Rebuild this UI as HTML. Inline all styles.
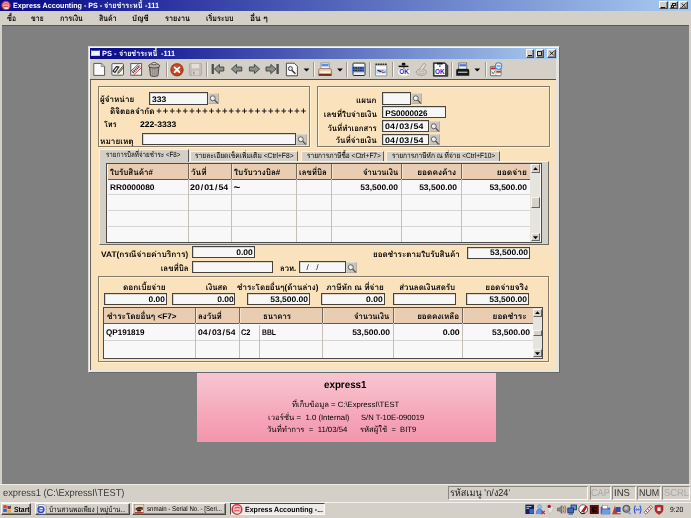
<!DOCTYPE html>
<html lang="th">
<head>
<meta charset="utf-8">
<title>Express Accounting - PS</title>
<style>
html,body{margin:0;padding:0;}
body{width:691px;height:518px;position:relative;overflow:hidden;background:#808080;
 font-family:"Liberation Sans","Loma","Noto Sans Thai Looped","Noto Sans Thai UI","Noto Sans Thai",sans-serif;font-size:7.5px;color:#000;}
div,span{box-sizing:border-box;}
.a{position:absolute;}
.t{position:absolute;white-space:nowrap;font-weight:bold;line-height:12px;height:12px;text-rendering:geometricPrecision;}
.inp{position:absolute;background:#f7f7f7;border:0.9px solid #46423c;box-shadow:inset 0.8px 0.8px 0 #d0ccc4;}
.sb{position:absolute;background:#c9c5bd;border:0.6px solid #b4b0a8;border-top-color:#dcd8d0;border-left-color:#dcd8d0;}
.grp{position:absolute;border:1px solid #857b6a;box-shadow:inset 1px 1px 0 #fff2da,1px 1px 0 #fff2da;}
.hd{position:absolute;background:#e8cdb2;}
.hv{position:absolute;width:1px;background:#74695a;box-shadow:1px 0 0 #f4e2cc;}
.vl{position:absolute;width:1px;background:#c4c0b8;}
.hl{position:absolute;height:1px;background:#d6d4d0;}
.tab{position:absolute;background:#d4d0c8;border-top:1px solid #f4f2ee;border-left:1px solid #f4f2ee;border-right:1px solid #5c5c5c;}
.tsep{position:absolute;width:1px;background:#9c9890;box-shadow:1px 0 0 #f4f2ee;}
.tb{position:absolute;background:#d4d0c8;border:1px solid #f8f8f4;border-right-color:#484848;border-bottom-color:#484848;box-shadow:inset -1px -1px 0 #8c8880;}
.sbb{position:absolute;background:#d6d2ca;border:0.8px solid #f6f4f0;border-right-color:#66645f;border-bottom-color:#66645f;}
.pn{position:absolute;border:1px solid #8c8880;border-right-color:#f8f8f4;border-bottom-color:#f8f8f4;}
</style>
</head>
<body>
<!-- ===== main title bar ===== -->
<div class="a" style="left:0;top:0;width:691px;height:11px;background:linear-gradient(90deg,#0a0a8a 0%,#101490 8%,#a8ccf0 100%);"></div>
<svg class="a" style="left:0;top:0;" width="12" height="11" viewBox="0 0 12 11"><circle cx="6" cy="5.5" r="4.1" fill="#eea0b0" stroke="#c03c40" stroke-width="1.2"/><path d="M3.8 4.6 Q6 2.8 8.4 4.4 M3.6 6.6 H8" stroke="#cc3838" stroke-width="0.8" fill="none"/><ellipse cx="6.4" cy="8.2" rx="2.2" ry="0.9" fill="#f4ecd0"/></svg>
<!-- ===== menu bar ===== -->
<div class="a" style="left:0;top:10.5px;width:691px;height:14.5px;background:#d4d0c8;"></div>
<div class="a" style="left:0;top:24.6px;width:691px;height:1.6px;background:#5a5a5a;"></div>
<div class="a" style="left:0;top:24.6px;width:1.5px;height:460px;background:#d4d0c8;"></div>
<div class="a" style="left:689px;top:24.6px;width:2px;height:460px;background:#d4d0c8;"></div>
<!-- ===== pink info box ===== -->
<div class="a" style="left:196.5px;top:366px;width:299.5px;height:75.6px;background:linear-gradient(180deg,#f8c8d3 0%,#f7bcc9 28%,#f5a4b7 70%,#f395ab 100%);"></div>
<!-- ===== status bar ===== -->
<div class="a" style="left:0;top:483.6px;width:691px;height:19px;background:#d4d0c8;border-top:1px solid #ecebe6;"></div>
<div class="pn" style="left:447.5px;top:486.3px;width:140.5px;height:14px;"></div>
<div class="pn" style="left:589.8px;top:486.3px;width:21px;height:14px;"></div>
<div class="pn" style="left:612px;top:486.3px;width:23.8px;height:14px;"></div>
<div class="pn" style="left:637px;top:486.3px;width:23.6px;height:14px;"></div>
<div class="pn" style="left:662.4px;top:486.3px;width:28px;height:14px;"></div>
<!-- ===== taskbar ===== -->
<div class="a" style="left:0;top:501.6px;width:691px;height:16.4px;background:#d4d0c8;border-top:1px solid #f4f3ef;"></div>
<div class="tb" style="left:1.3px;top:503.3px;width:29.4px;height:12px;"></div>
<div class="tb" style="left:34.5px;top:503.3px;width:95px;height:12px;"></div>
<div class="tb" style="left:132px;top:503.3px;width:94.4px;height:12px;"></div>
<div class="a" style="left:229.5px;top:503.3px;width:95.5px;height:12px;background:#ecebe8;border:1px solid #484848;border-right-color:#f8f8f4;border-bottom-color:#f8f8f4;"></div>
<!--TRAY_START-->
<svg class="a" style="left:0px;top:502px;" width="691" height="16" viewBox="0 502 691 16">
<!-- start flag -->
<path d="M3.2 505.4 Q5 504.4 6.8 505.4 V508.4 Q5 507.4 3.2 508.4 Z" fill="#e04030"/>
<path d="M7.4 505.6 Q9.2 506.6 11 505.6 V508.6 Q9.2 509.6 7.4 508.6 Z" fill="#704838"/>
<path d="M3.2 509 Q5 508 6.8 509 V512.2 Q5 511.2 3.2 512.2 Z" fill="#3060d8"/>
<path d="M7.4 509.2 Q9.2 510.2 11 509.2 V512.2 Q9.2 513.2 7.4 512.2 Z" fill="#e8a040"/>
<!-- ie doc icon -->
<path d="M38.6 504.6 H44 L46 506.6 V514 H38.6 Z" fill="#fafafa" stroke="#6c6c6c" stroke-width="0.6"/>
<circle cx="41" cy="509.6" r="2.9" fill="none" stroke="#2848d0" stroke-width="1.5"/>
<path d="M38.2 509.8 H43.6" stroke="#2848d0" stroke-width="1"/>
<path d="M37.4 511.6 Q40 506 44.6 506.4" stroke="#5c8cf0" stroke-width="0.7" fill="none"/>
<!-- snmain icon -->
<rect x="134.6" y="504.6" width="9.2" height="9.2" fill="#e8d8c0" stroke="#8c7c6c" stroke-width="0.5"/>
<path d="M135.4 508.4 Q139 505.6 143 507.6 L142.6 510 Q139 508.2 135.8 510.4 Z" fill="#5c2c1c"/>
<ellipse cx="139" cy="510.4" rx="2.2" ry="1.2" fill="#2c1c14"/>
<rect x="135" y="512" width="8.4" height="1.6" fill="#b84030"/>
<!-- express icon -->
<circle cx="237" cy="509.4" r="4.8" fill="#f4b4c0" stroke="#cc3838" stroke-width="1.5"/>
<path d="M234.6 508.4 Q237 506.4 239.8 508 M234.4 510.8 H239.2" stroke="#cc3838" stroke-width="0.9" fill="none"/>
<ellipse cx="237.4" cy="512.4" rx="2.4" ry="1" fill="#f4ecd0"/>
<!-- tray -->
<rect x="525.4" y="504.6" width="8.6" height="9.4" fill="#14205c"/>
<rect x="529.4" y="509" width="4.4" height="4.6" fill="#3c64c8"/>
<path d="M526.4 506.6 H531.4 M526.4 508.4 H529" stroke="#e8ecf8" stroke-width="0.8"/>
<circle cx="539.6" cy="506.6" r="1.9" fill="#9cc4f4" stroke="#3c74d0" stroke-width="0.5"/>
<path d="M536.2 513.6 Q536.2 509 539.6 509 Q543 509 543 513.6 Z" fill="#5c94e8" stroke="#3064c0" stroke-width="0.5"/>
<path d="M541.4 510.8 L544.8 514 M544.8 510.8 L541.4 514" stroke="#d02020" stroke-width="1.1"/>
<path d="M546.8 505.6 L554 506.4 L551.6 512.6 L549 513.4 Z" fill="#e4e2dc" stroke="#b4b0a8" stroke-width="0.5"/>
<circle cx="549.2" cy="506.4" r="1.7" fill="#a01c1c"/>
<path d="M557.4 508 H559.4 L562 505.4 V513.6 L559.4 511 H557.4 Z" fill="#8c8880" stroke="#4c4c4c" stroke-width="0.5"/>
<path d="M563.2 506.4 Q565 509.4 563.2 512.6 M564.8 505.4 Q567 509.4 564.8 513.6" stroke="#c03028" stroke-width="0.8" fill="none"/>
<rect x="571" y="505" width="5.6" height="4.8" fill="#5c8cd8" stroke="#1c2c5c" stroke-width="0.8"/>
<rect x="567.8" y="508" width="5.6" height="4.8" fill="#3c6cc0" stroke="#1c2c5c" stroke-width="0.8"/>
<path d="M568.6 514 H573" stroke="#1c2c5c" stroke-width="0.9"/>
<circle cx="583.2" cy="509.2" r="4.4" fill="#f8f8f8" stroke="#3c3c3c" stroke-width="0.8"/>
<path d="M581 511.8 L585.4 505.4 L587.4 506.6 L584 512.4 Z" fill="#b01c24"/>
<path d="M580.2 512.6 Q582 514.4 585 513" stroke="#111" stroke-width="1" fill="none"/>
<rect x="589.8" y="505" width="9" height="9" fill="#5c0c0c"/>
<path d="M592 507 H596.8 V508.6 H594 V510.6 H596.8 V512.2 H592 Z" fill="#0c0404"/>
<path d="M601 507 H604 L605 508 H609.8 V514 H601 Z" fill="#3c74d8" stroke="#1c3c8c" stroke-width="0.5"/>
<rect x="602.4" y="505.2" width="5" height="3.6" fill="#fcfcfc" stroke="#5c5c5c" stroke-width="0.4"/>
<path d="M601.4 514 L602.6 509.6 H610 L609.4 514 Z" fill="#6c9cf0"/>
<path d="M612.4 513.6 L615 505.4 L617.4 513.6 Z" fill="#c83820"/>
<rect x="616" y="507" width="4.6" height="5" fill="#2c4cc0"/>
<path d="M612.2 513.8 H620.8" stroke="#5c2c1c" stroke-width="0.8"/>
<circle cx="626.4" cy="508.8" r="3.6" fill="#8c8c8c" stroke="#3c3c3c" stroke-width="0.8"/>
<circle cx="626" cy="508.2" r="1.6" fill="#c4c4c4"/>
<path d="M627.6 512 L630.6 514" stroke="#7c9cd8" stroke-width="1.6"/>
<path d="M635.4 505.6 Q633 509.6 635.4 513.6 M639.8 505.6 Q642.2 509.6 639.8 513.6" stroke="#2c54d8" stroke-width="1.1" fill="none"/>
<path d="M635.8 509.6 H639.4 M636.8 508.4 L635.6 509.6 L636.8 510.8 M638.4 508.4 L639.6 509.6 L638.4 510.8" stroke="#2c54d8" stroke-width="0.7" fill="none"/>
<path d="M644 512.4 L650.6 505.4 L652.6 507.2 L646 514.2 Z" fill="#f4f4f4" stroke="#8c1c1c" stroke-width="0.6"/>
<path d="M645.6 510.8 L647.6 512.6 M647.4 508.8 L649.4 510.6 M649.2 506.8 L651.2 508.6" stroke="#c02020" stroke-width="1"/>
<path d="M655 505.6 Q659 504.6 663 505.6 V509.6 Q663 512.6 659 514.4 Q655 512.6 655 509.6 Z" fill="#c02828" stroke="#6c2c3c" stroke-width="0.6"/>
<path d="M657.4 507.4 H660.6 V511 H657.4 Z" fill="#f4e4e4"/>
</svg>
<!--TRAY_END-->
<!-- ===== child window ===== -->
<div class="a" style="left:88px;top:46px;width:472px;height:327.2px;background:#e6e4de;border:1px solid #dcd9d2;border-right-color:#6a6a6a;border-bottom-color:#6a6a6a;box-shadow:inset 1px 1px 0 #f6f5f1;"></div>
<div class="a" style="left:90.3px;top:58.4px;width:466.2px;height:21px;background:#d4d0c8;"></div>
<div class="a" style="left:90.3px;top:48.2px;width:466.4px;height:10.4px;background:linear-gradient(90deg,#0a0a8a 0%,#101490 8%,#a8ccf0 100%);"></div>
<!-- child title icon -->
<div class="a" style="left:91.4px;top:49.8px;width:8.2px;height:6.6px;background:#f4f4f4;border:0.6px solid #c8d0e4;border-top:1.6px solid #2c50b0;"></div>
<!-- child title buttons -->
<div class="tb" style="left:526.3px;top:49.4px;width:8.2px;height:8.2px;"></div>
<div class="tb" style="left:535.6px;top:49.4px;width:8.8px;height:8.2px;"></div>
<div class="tb" style="left:546.7px;top:49.4px;width:9px;height:8.2px;"></div>
<div class="a" style="left:528.2px;top:55.2px;width:3.4px;height:1px;background:#111;"></div>
<div class="a" style="left:537.4px;top:51.2px;width:5px;height:5px;border:0.55px solid #222;border-top-width:1.1px;"></div>
<svg class="a" style="left:548.6px;top:51.2px;" width="5.4" height="4.6" viewBox="0 0 5.4 4.6"><path d="M0.6 0.4 L4.8 4.2 M4.8 0.4 L0.6 4.2" stroke="#111" stroke-width="0.9" fill="none"/></svg>
<!-- main title buttons -->
<div class="tb" style="left:659px;top:1.4px;width:8.6px;height:8px;"></div>
<div class="tb" style="left:668.6px;top:1.4px;width:9.2px;height:8px;"></div>
<div class="tb" style="left:679.3px;top:1.4px;width:9px;height:8px;"></div>
<div class="a" style="left:661.2px;top:6.9px;width:3.6px;height:1px;background:#111;"></div>
<div class="a" style="left:671.8px;top:2.8px;width:3.8px;height:3.2px;border:0.5px solid #222;border-top-width:1px;"></div>
<div class="a" style="left:670.5px;top:4.5px;width:3.8px;height:3.4px;border:0.5px solid #222;border-top-width:1px;background:#d4d0c8;"></div>
<svg class="a" style="left:681.2px;top:3px;" width="5.4" height="4.8" viewBox="0 0 5.4 4.8"><path d="M0.6 0.4 L4.8 4.4 M4.8 0.4 L0.6 4.4" stroke="#111" stroke-width="0.9" fill="none"/></svg>
<!-- toolbar separators -->
<div class="tsep" style="left:165.6px;top:61.5px;height:15px;"></div>
<div class="tsep" style="left:205.8px;top:61.5px;height:15px;"></div>
<div class="tsep" style="left:313.4px;top:61.5px;height:15px;"></div>
<div class="tsep" style="left:346.2px;top:61.5px;height:15px;"></div>
<div class="tsep" style="left:369.4px;top:61.5px;height:15px;"></div>
<div class="tsep" style="left:392px;top:61.5px;height:15px;"></div>
<div class="tsep" style="left:451.2px;top:61.5px;height:15px;"></div>
<div class="tsep" style="left:484.6px;top:61.5px;height:15px;"></div>
<!--TOOLBAR_START-->
<svg class="a" style="left:88px;top:58px;" width="472" height="22" viewBox="88 58 472 22">
<!-- new doc -->
<path d="M93.8 63.4 H101.4 L104.6 66.4 V75.4 H93.8 Z" fill="#fbfbfb" stroke="#4c4c4c" stroke-width="0.9"/>
<path d="M101.2 63.6 V66.6 H104.4" fill="#dcdcdc" stroke="#6c6c6c" stroke-width="0.7"/>
<!-- edit doc -->
<rect x="111.9" y="63.6" width="11.6" height="11.6" rx="1" fill="#f4f4f4" stroke="#4c4c4c" stroke-width="0.9"/>
<path d="M113 71.2 L116.4 66.6 L118.8 67 L115 72.4 Z" fill="#fff" stroke="#222" stroke-width="1.1"/>
<path d="M117.6 73.4 L118.2 71.6 L122.6 66.2 L123.8 67.2 L119.4 72.6 Z" fill="#c8a040" stroke="#3c3c3c" stroke-width="0.7"/>
<!-- cancel doc -->
<rect x="130.8" y="63.6" width="10.8" height="11.6" fill="#f6f6f6" stroke="#4c4c4c" stroke-width="0.9"/>
<path d="M132.6 72.6 L139.8 65.6" stroke="#444" stroke-width="2.4" stroke-dasharray="1.2 0.7"/>
<path d="M131 71 L138.6 63.8 M133.6 75 L141.4 67.6" stroke="#d02020" stroke-width="0.9"/>
<!-- trash -->
<path d="M149.4 66.6 L150.4 75.8 Q154.2 77.4 158 75.8 L159 66.6 Z" fill="#8c8880" stroke="#3c3c3c" stroke-width="0.8"/>
<path d="M151.6 68 V75.6 M153.4 68 V76 M155.2 68 V76 M157 68 V75.6" stroke="#c4c0b8" stroke-width="0.6"/>
<ellipse cx="154.2" cy="65.8" rx="5.6" ry="2.2" fill="#b4b0a8" stroke="#3c3c3c" stroke-width="0.8"/>
<ellipse cx="154.2" cy="63.6" rx="2.4" ry="1.2" fill="#d4d0c8" stroke="#3c3c3c" stroke-width="0.7"/>
<!-- red x -->
<circle cx="177" cy="69.8" r="6.3" fill="#b8401c" stroke="#8c2c10" stroke-width="0.6"/>
<circle cx="176.6" cy="69.2" r="4.6" fill="#cc5430" opacity="0.7"/>
<path d="M174.6 67.4 L179.4 72.2 M179.4 67.4 L174.6 72.2" stroke="#fff" stroke-width="1.9" stroke-linecap="round"/>
<!-- floppy disabled -->
<rect x="189.4" y="63.4" width="12.2" height="12" rx="0.8" fill="#c2beb6" stroke="#aaa69e" stroke-width="0.8"/>
<rect x="191.6" y="63.8" width="7.6" height="4.6" fill="#e2e0da"/>
<rect x="192" y="70.6" width="7" height="4.6" fill="#d6d2ca"/>
<rect x="193" y="71.6" width="1.6" height="2.8" fill="#9c988f"/>
<!-- first -->
<rect x="211.6" y="64" width="2.3" height="10" fill="#4c504c"/>
<path d="M214.4 69 L219.4 64.4 V67 H223.8 V71 H219.4 V73.6 Z" fill="#8c908c" stroke="#3c403c" stroke-width="0.9"/>
<!-- prev -->
<path d="M231.4 69 L236.6 64.4 V67 H241.8 V71 H236.6 V73.6 Z" fill="#8c908c" stroke="#3c403c" stroke-width="0.9"/>
<!-- next -->
<path d="M259.6 69 L254.4 64.4 V67 H249.4 V71 H254.4 V73.6 Z" fill="#8c908c" stroke="#3c403c" stroke-width="0.9"/>
<!-- last -->
<path d="M276 69 L270.8 64.4 V67 H266 V71 H270.8 V73.6 Z" fill="#8c908c" stroke="#3c403c" stroke-width="0.9"/>
<rect x="276.4" y="64" width="2.4" height="10" fill="#4c504c"/>
<!-- preview doc -->
<path d="M286.4 63.2 H294.2 L297.4 66.2 V75.8 H286.4 Z" fill="#f8f8f8" stroke="#3c3c3c" stroke-width="0.9"/>
<circle cx="290.4" cy="68.6" r="2" fill="#e8ecf0" stroke="#2c2c2c" stroke-width="0.9"/>
<path d="M291.8 70.2 L295.4 73.8" stroke="#2c2c2c" stroke-width="1.3"/>
<path d="M303.6 68.4 H309.4 L306.5 71.4 Z" fill="#000"/>
<!-- printer color -->
<rect x="321" y="63" width="8.2" height="6" fill="#f4f8fc" stroke="#5c6c8c" stroke-width="0.6"/>
<rect x="321.6" y="64" width="7" height="2.4" fill="#5c8ce0"/>
<path d="M318.6 70.2 Q318.6 68.6 320.4 68.6 H329.8 Q331.6 68.6 331.6 70.2 V74 H318.6 Z" fill="#ecd0ac" stroke="#80604c" stroke-width="0.7"/>
<rect x="320.4" y="71.4" width="9.6" height="1.6" fill="#fcf4e8"/>
<rect x="318.6" y="74" width="13" height="1.9" fill="#7c2818"/>
<path d="M337.1 68.4 H342.9 L340 71.4 Z" fill="#000"/>
<!-- doc list icon -->
<rect x="353" y="63.1" width="12" height="12.4" rx="0.8" fill="#fafafa" stroke="#2c2c2c" stroke-width="1"/>
<rect x="351.9" y="66.6" width="12.6" height="5.7" fill="#4c7cd0"/>
<path d="M353 68 H363.6 M353 70.4 H363.6" stroke="#1c2430" stroke-width="1.3" stroke-dasharray="1.6 0.8"/>
<path d="M354 73.9 H364" stroke="#c8c8c8" stroke-width="0.6"/>
<!-- doc list 2 -->
<rect x="375.4" y="65" width="11.4" height="10.8" rx="0.6" fill="#ececec" stroke="#7c7c7c" stroke-width="0.8"/>
<path d="M375.4 64.2 H387" stroke="#2c2c2c" stroke-width="1.5" stroke-dasharray="1.7 0.7"/>
<rect x="376.2" y="66.6" width="9.8" height="2" fill="#fcfcfc"/>
<rect x="376.2" y="69" width="9.8" height="4.6" fill="#c8d8f4"/>
<path d="M377.6 70.4 L381.4 71.6" stroke="#14207c" stroke-width="1.3" fill="none"/>
<path d="M381.4 71.2 L383.4 70.4" stroke="#d03030" stroke-width="0.9"/>
<path d="M382 72.6 L385.6 72" stroke="#2c4cc0" stroke-width="0.9"/>
<rect x="376.2" y="73.9" width="9.8" height="1.3" fill="#fcfcfc"/>
<!-- OK stamp -->
<rect x="401.8" y="62.8" width="3.6" height="2.6" rx="1" fill="#111"/>
<rect x="398.6" y="65.6" width="9.8" height="1.5" fill="#111"/>
<ellipse cx="404" cy="72" rx="6" ry="3.8" fill="#fcfcfc"/>
<rect x="403.2" y="67.4" width="1.4" height="1.2" fill="#2030c0"/>
<text x="404" y="74.4" font-family="Liberation Sans, sans-serif" font-size="6.4" font-weight="bold" fill="#1c2cc8" text-anchor="middle">OK</text>
<!-- grey stamp -->
<ellipse cx="421.4" cy="72.2" rx="5.2" ry="3.2" fill="none" stroke="#9c9890" stroke-width="0.9"/>
<ellipse cx="421.4" cy="72.4" rx="2.8" ry="1.4" fill="none" stroke="#aaa69e" stroke-width="0.7"/>
<path d="M419.6 69 L423.4 63.8 Q425.4 63 426 64.8 L422.6 70" fill="#e0ded8" stroke="#9c9890" stroke-width="0.9"/>
<!-- OK doc -->
<path d="M433.4 62.8 H445.2 L447.8 65.6 V76.2 H433.4 Z" fill="#4c4c4c" stroke="#222" stroke-width="0.8"/>
<rect x="434.6" y="64" width="10.4" height="11" fill="#fafafa"/>
<rect x="437" y="62.8" width="5.6" height="1.7" fill="#111"/>
<rect x="439.2" y="65.4" width="1.4" height="1.4" fill="#2030c0"/>
<text x="439.9" y="74" font-family="Liberation Sans, sans-serif" font-size="6.4" font-weight="bold" fill="#1c2cc8" text-anchor="middle">OK</text>
<!-- black printer -->
<rect x="458.8" y="63" width="8" height="6.4" fill="#f0f4fc" stroke="#3c3c3c" stroke-width="0.6"/>
<rect x="459.4" y="64.2" width="6.8" height="2.2" fill="#4c74d8"/>
<path d="M456.2 70.4 Q456.2 68.8 458 68.8 H467.4 Q469.2 68.8 469.2 70.4 V75.8 H456.2 Z" fill="#141c14"/>
<rect x="458" y="71.6" width="9.4" height="1.3" fill="#b8c0b8"/>
<path d="M474.4 68.4 H480.2 L477.3 71.4 Z" fill="#000"/>
<!-- last icon -->
<rect x="490.4" y="66.4" width="10.6" height="9.4" rx="0.8" fill="#c8c8c8" stroke="#5c5c5c" stroke-width="0.8"/>
<rect x="491" y="67.6" width="4.8" height="1.6" fill="#c02020"/>
<rect x="491.2" y="70.4" width="4" height="4.4" fill="#f4f4f4"/>
<path d="M491.8 71.6 L493.2 73.8 L495 70.8" stroke="#333" stroke-width="0.7" fill="none"/>
<rect x="496.4" y="71" width="4.4" height="1.6" fill="#d03030"/>
<rect x="496.4" y="73.4" width="4.4" height="1.6" fill="#f4f4f4"/>
<circle cx="498.6" cy="66" r="3.2" fill="#e4f0fc" stroke="#4c84d4" stroke-width="1.1"/>
<rect x="496.6" y="65.4" width="4" height="1.2" fill="#4c84d4"/>
</svg>
<!--TOOLBAR_END-->
<!-- ===== form ===== -->
<div class="a" style="left:90px;top:78.9px;width:466.2px;height:290.7px;background:#fae2bd;border-top:1px solid #56524c;border-left:1px solid #66625a;"></div>
<div class="grp" style="left:97.5px;top:86.4px;width:212.4px;height:60.6px;"></div>
<div class="grp" style="left:317.4px;top:86.4px;width:233px;height:60.6px;"></div>
<div class="grp" style="left:98px;top:276.4px;width:451px;height:86px;"></div>
<!-- inputs -->
<div class="inp" style="left:148.7px;top:92.4px;width:59.5px;height:12.2px;"></div>
<div class="inp" style="left:141.8px;top:133.4px;width:154.1px;height:12.1px;"></div>
<div class="inp" style="left:382.4px;top:92.4px;width:28.5px;height:12.2px;"></div>
<div class="inp" style="left:382.4px;top:106.4px;width:63.8px;height:12.1px;"></div>
<div class="inp" style="left:382.4px;top:120.3px;width:46.4px;height:11.7px;"></div>
<div class="inp" style="left:382.4px;top:133.7px;width:46.4px;height:11.7px;"></div>
<div class="inp" style="left:192.1px;top:246.4px;width:62.7px;height:12.1px;"></div>
<div class="inp" style="left:466.5px;top:246.5px;width:63.2px;height:12.1px;"></div>
<div class="inp" style="left:192.1px;top:260.7px;width:80.7px;height:12.3px;"></div>
<div class="inp" style="left:298.9px;top:261px;width:46.7px;height:12.0px;"></div>
<div class="inp" style="left:103.7px;top:293px;width:63.0px;height:12.3px;"></div>
<div class="inp" style="left:172px;top:293px;width:63.0px;height:12.3px;"></div>
<div class="inp" style="left:246.9px;top:293px;width:63.0px;height:12.3px;"></div>
<div class="inp" style="left:321px;top:293px;width:63.5px;height:12.3px;"></div>
<div class="inp" style="left:393.1px;top:293px;width:62.8px;height:12.3px;"></div>
<div class="inp" style="left:466px;top:293px;width:62.9px;height:12.3px;"></div>
<!-- inputs group 2 -->
<!-- tabs -->
<div class="a" style="left:98.6px;top:161px;width:450.6px;height:84.2px;background:#d4d0c8;border-top:1px solid #f4f2ee;border-left:1px solid #f4f2ee;border-right:1.2px solid #6c6a66;border-bottom:1.1px solid #6c6a66;"></div>
<div class="tab" style="left:190px;top:150.6px;width:108.4px;height:10.4px;"></div>
<div class="tab" style="left:300.6px;top:150.6px;width:83.4px;height:10.4px;"></div>
<div class="tab" style="left:386px;top:150.6px;width:114px;height:10.4px;"></div>
<div class="tab" style="left:98.6px;top:149.2px;width:90px;height:12.8px;"></div>
<!-- grid 1 -->
<div class="a" style="left:106.4px;top:162.8px;width:435.2px;height:79.9px;background:#f8f8f8;border:1.4px solid #4c4a46;border-right-width:1.1px;border-bottom-width:1.1px;"></div>
<div class="hd" style="left:107.8px;top:164.2px;width:422.6px;height:15.6px;border-bottom:1.2px solid #635a4e;"></div>
<div class="hl" style="left:107.8px;top:194.4px;width:422.6px;"></div>
<div class="hl" style="left:107.8px;top:210.1px;width:422.6px;"></div>
<div class="hl" style="left:107.8px;top:225.7px;width:422.6px;"></div>
<div class="vl" style="left:187.8px;top:164.2px;height:77.4px;"></div>
<div class="vl" style="left:230.8px;top:164.2px;height:77.4px;"></div>
<div class="vl" style="left:295.6px;top:164.2px;height:77.4px;"></div>
<div class="vl" style="left:331.4px;top:164.2px;height:77.4px;"></div>
<div class="vl" style="left:400.8px;top:164.2px;height:77.4px;"></div>
<div class="vl" style="left:460.6px;top:164.2px;height:77.4px;"></div>
<div class="hv" style="left:187.8px;top:164.2px;height:14.6px;"></div>
<div class="hv" style="left:230.8px;top:164.2px;height:14.6px;"></div>
<div class="hv" style="left:295.6px;top:164.2px;height:14.6px;"></div>
<div class="hv" style="left:331.4px;top:164.2px;height:14.6px;"></div>
<div class="hv" style="left:400.8px;top:164.2px;height:14.6px;"></div>
<div class="hv" style="left:460.6px;top:164.2px;height:14.6px;"></div>
<!-- scrollbar 1 -->
<div class="a" style="left:530.4px;top:164.2px;width:10.1px;height:77.4px;background:#e6e4de;"></div>
<div class="sbb" style="left:530.6px;top:164.4px;width:9.8px;height:8.2px;"></div>
<div class="sbb" style="left:530.6px;top:197px;width:9.8px;height:11.2px;"></div>
<div class="sbb" style="left:530.6px;top:232.6px;width:9.8px;height:8.8px;"></div>
<svg class="a" style="left:533px;top:166.8px;" width="5" height="3.4" viewBox="0 0 5 3.4"><path d="M0 3.2 L2.5 0.2 L5 3.2 Z" fill="#000"/></svg>
<svg class="a" style="left:533px;top:235.6px;" width="5" height="3.4" viewBox="0 0 5 3.4"><path d="M0 0.2 L2.5 3.2 L5 0.2 Z" fill="#000"/></svg>
<!-- vat row -->
<!-- group 3 inputs -->
<!-- grid 2 -->
<div class="a" style="left:102.9px;top:306.9px;width:440.5px;height:51.8px;background:#f8f8f8;border:1.4px solid #4c4a46;border-right-width:1.1px;border-bottom-width:1.1px;"></div>
<div class="hd" style="left:104.3px;top:308.3px;width:428.6px;height:16.2px;border-bottom:1.3px solid #635a4e;"></div>
<div class="hl" style="left:104.3px;top:340.3px;width:428.6px;"></div>
<div class="vl" style="left:194.8px;top:308.3px;height:49.3px;"></div>
<div class="vl" style="left:238.6px;top:308.3px;height:49.3px;"></div>
<div class="vl" style="left:259.4px;top:324.6px;height:33px;"></div>
<div class="vl" style="left:322.2px;top:308.3px;height:49.3px;"></div>
<div class="vl" style="left:392.5px;top:308.3px;height:49.3px;"></div>
<div class="vl" style="left:462.1px;top:308.3px;height:49.3px;"></div>
<div class="hv" style="left:194.8px;top:308.3px;height:15px;"></div>
<div class="hv" style="left:238.6px;top:308.3px;height:15px;"></div>
<div class="hv" style="left:322.2px;top:308.3px;height:15px;"></div>
<div class="hv" style="left:392.5px;top:308.3px;height:15px;"></div>
<div class="hv" style="left:462.1px;top:308.3px;height:15px;"></div>
<!-- scrollbar 2 -->
<div class="a" style="left:532.9px;top:308.3px;width:9.4px;height:49.3px;background:#e6e4de;"></div>
<div class="sbb" style="left:533px;top:308.6px;width:9.2px;height:8.2px;"></div>
<div class="sbb" style="left:533px;top:329.6px;width:9.2px;height:6.4px;"></div>
<div class="sbb" style="left:533px;top:349.4px;width:9.2px;height:8px;"></div>
<svg class="a" style="left:535.2px;top:311px;" width="5" height="3.4" viewBox="0 0 5 3.4"><path d="M0 3.2 L2.5 0.2 L5 3.2 Z" fill="#000"/></svg>
<svg class="a" style="left:535.2px;top:351.8px;" width="5" height="3.4" viewBox="0 0 5 3.4"><path d="M0 0.2 L2.5 3.2 L5 0.2 Z" fill="#000"/></svg>
<div class="sb" style="left:208.3px;top:92.5px;width:10.8px;height:11.4px;"></div>
<svg class="a" style="left:208.3px;top:92.5px;" width="10.8" height="11.4" viewBox="0 0 10.8 11.4"><circle cx="4.8" cy="5.3" r="2.5" fill="#e8e8e4" stroke="#585858" stroke-width="0.9"/><circle cx="4.2" cy="4.7" r="0.9" fill="#fff"/><path d="M6.7 7.3 L9.9 10.4" stroke="#4c4c4c" stroke-width="1.2"/></svg>
<div class="sb" style="left:296.2px;top:133.8px;width:10.8px;height:11.4px;"></div>
<svg class="a" style="left:296.2px;top:133.8px;" width="10.8" height="11.4" viewBox="0 0 10.8 11.4"><circle cx="4.8" cy="5.3" r="2.5" fill="#e8e8e4" stroke="#585858" stroke-width="0.9"/><circle cx="4.2" cy="4.7" r="0.9" fill="#fff"/><path d="M6.7 7.3 L9.9 10.4" stroke="#4c4c4c" stroke-width="1.2"/></svg>
<div class="sb" style="left:411.1px;top:92.6px;width:10.8px;height:11.4px;"></div>
<svg class="a" style="left:411.1px;top:92.6px;" width="10.8" height="11.4" viewBox="0 0 10.8 11.4"><circle cx="4.8" cy="5.3" r="2.5" fill="#e8e8e4" stroke="#585858" stroke-width="0.9"/><circle cx="4.2" cy="4.7" r="0.9" fill="#fff"/><path d="M6.7 7.3 L9.9 10.4" stroke="#4c4c4c" stroke-width="1.2"/></svg>
<div class="sb" style="left:429px;top:120.6px;width:10.8px;height:11.4px;"></div>
<svg class="a" style="left:429px;top:120.6px;" width="10.8" height="11.4" viewBox="0 0 10.8 11.4"><circle cx="4.8" cy="5.3" r="2.5" fill="#e8e8e4" stroke="#585858" stroke-width="0.9"/><circle cx="4.2" cy="4.7" r="0.9" fill="#fff"/><path d="M6.7 7.3 L9.9 10.4" stroke="#4c4c4c" stroke-width="1.2"/></svg>
<div class="sb" style="left:429px;top:133.9px;width:10.8px;height:11.4px;"></div>
<svg class="a" style="left:429px;top:133.9px;" width="10.8" height="11.4" viewBox="0 0 10.8 11.4"><circle cx="4.8" cy="5.3" r="2.5" fill="#e8e8e4" stroke="#585858" stroke-width="0.9"/><circle cx="4.2" cy="4.7" r="0.9" fill="#fff"/><path d="M6.7 7.3 L9.9 10.4" stroke="#4c4c4c" stroke-width="1.2"/></svg>
<div class="sb" style="left:345.9px;top:261.6px;width:10.8px;height:11.4px;"></div>
<svg class="a" style="left:345.9px;top:261.6px;" width="10.8" height="11.4" viewBox="0 0 10.8 11.4"><circle cx="4.8" cy="5.3" r="2.5" fill="#e8e8e4" stroke="#585858" stroke-width="0.9"/><circle cx="4.2" cy="4.7" r="0.9" fill="#fff"/><path d="M6.7 7.3 L9.9 10.4" stroke="#4c4c4c" stroke-width="1.2"/></svg>
<div class="a" style="left:0;top:0;width:691px;height:518px;will-change:transform;">
<span class="t" style="top:0px;font-size:7.5px;color:#fff;left:12.8px;transform:scaleX(0.954);transform-origin:0 50%;white-space:pre;max-width:97.2px;overflow-x:clip;">Express Accounting - PS - </span>
<span class="t" style="top:0px;font-size:7.5px;color:#fff;left:104.0px;transform:scaleX(0.957);transform-origin:0 50%;max-width:42.0px;overflow-x:clip;">จ่ายชำระหนี้</span>
<span class="t" style="top:0px;font-size:7.5px;color:#fff;left:142.9px;transform:scaleX(0.989);transform-origin:0 50%;white-space:pre;max-width:17.9px;overflow-x:clip;"> -111</span>
<span class="t" style="top:13px;font-size:7.9px;left:6.9px;transform:scaleX(0.881);transform-origin:0 50%;max-width:11.9px;overflow-x:clip;">ซื้อ</span>
<span class="t" style="top:13px;font-size:7.9px;left:31.3px;transform:scaleX(0.879);transform-origin:0 50%;max-width:16.1px;overflow-x:clip;">ขาย</span>
<span class="t" style="top:13px;font-size:7.9px;left:59.8px;transform:scaleX(0.906);transform-origin:0 50%;max-width:27.0px;overflow-x:clip;">การเงิน</span>
<span class="t" style="top:13px;font-size:7.9px;left:98.7px;transform:scaleX(0.888);transform-origin:0 50%;max-width:21.5px;overflow-x:clip;">สินค้า</span>
<span class="t" style="top:13px;font-size:7.9px;left:132.3px;transform:scaleX(0.977);transform-origin:0 50%;max-width:18.7px;overflow-x:clip;">บัญชี</span>
<span class="t" style="top:13px;font-size:7.9px;left:165.0px;transform:scaleX(0.926);transform-origin:0 50%;max-width:28.6px;overflow-x:clip;">รายงาน</span>
<span class="t" style="top:13px;font-size:7.9px;left:206.3px;transform:scaleX(0.901);transform-origin:0 50%;max-width:32.2px;overflow-x:clip;">เริ่มระบบ</span>
<span class="t" style="top:13px;font-size:7.9px;left:250.0px;transform:scaleX(1.068);transform-origin:0 50%;max-width:18.2px;overflow-x:clip;">อื่น ๆ</span>
<span class="t" style="top:48px;font-size:7.5px;color:#fff;left:102.4px;transform:scaleX(0.996);transform-origin:0 50%;white-space:pre;max-width:18.3px;overflow-x:clip;">PS - </span>
<span class="t" style="top:48px;font-size:7.5px;color:#fff;left:119.0px;transform:scaleX(0.950);transform-origin:0 50%;max-width:42.0px;overflow-x:clip;">จ่ายชำระหนี้</span>
<span class="t" style="top:48px;font-size:7.5px;color:#fff;left:158.8px;transform:scaleX(0.983);transform-origin:0 50%;white-space:pre;max-width:17.9px;overflow-x:clip;"> -111</span>
<span class="t" style="top:94px;font-size:8.1px;left:100.0px;transform:scaleX(1.000);transform-origin:0 50%;max-width:35.8px;overflow-x:clip;">ผู้จำหน่าย</span>
<span class="t" style="top:94px;font-size:8.1px;left:151.6px;transform:scaleX(1.058);transform-origin:0 50%;max-width:15.1px;overflow-x:clip;">333</span>
<span class="t" style="top:106px;font-size:8.1px;left:110.1px;transform:scaleX(0.998);transform-origin:0 50%;max-width:46.1px;overflow-x:clip;">ดิจิตอลจำกัด</span>
<span class="t" style="top:105px;font-size:9.3px;color:#1c1c1c;left:156.3px;letter-spacing:1.14px;max-width:152.7px;overflow-x:clip;">+++++++++++++++++++++++</span>
<span class="t" style="top:119px;font-size:8.1px;left:103.5px;transform:scaleX(0.891);transform-origin:0 50%;max-width:15.6px;overflow-x:clip;">โทร</span>
<span class="t" style="top:119px;font-size:8.1px;left:140.0px;transform:scaleX(1.061);transform-origin:0 50%;max-width:35.8px;overflow-x:clip;">222-3333</span>
<span class="t" style="top:136px;font-size:8.1px;left:100.0px;transform:scaleX(1.011);transform-origin:0 50%;max-width:34.9px;overflow-x:clip;">หมายเหตุ</span>
<span class="t" style="top:95px;font-size:8.1px;right:314.5px;transform:scaleX(0.995);transform-origin:100% 50%;max-width:22.0px;overflow-x:clip;">แผนก</span>
<span class="t" style="top:109px;font-size:8.1px;right:314.5px;transform:scaleX(0.988);transform-origin:100% 50%;max-width:55.6px;overflow-x:clip;">เลขที่ใบจ่ายเงิน</span>
<span class="t" style="top:123px;font-size:8.1px;right:314.5px;transform:scaleX(0.952);transform-origin:100% 50%;max-width:53.3px;overflow-x:clip;">วันที่ทำเอกสาร</span>
<span class="t" style="top:135px;font-size:8.1px;right:314.5px;transform:scaleX(0.986);transform-origin:100% 50%;max-width:43.3px;overflow-x:clip;">วันที่จ่ายเงิน</span>
<span class="t" style="top:108px;font-size:8.1px;left:385.3px;transform:scaleX(1.000);transform-origin:0 50%;max-width:43.9px;overflow-x:clip;">PS0000026</span>
<span class="t" style="top:121px;font-size:8.1px;left:385.0px;transform:scaleX(1.097);transform-origin:0 50%;max-width:36.7px;overflow-x:clip;">04<span style="margin:0 0.9px">/</span>03<span style="margin:0 0.9px">/</span>54</span>
<span class="t" style="top:135px;font-size:8.1px;left:385.0px;transform:scaleX(1.097);transform-origin:0 50%;max-width:36.7px;overflow-x:clip;">04<span style="margin:0 0.9px">/</span>03<span style="margin:0 0.9px">/</span>54</span>
<span class="t" style="top:149px;font-size:7.5px;font-weight:normal;left:106.2px;transform:scaleX(0.830);transform-origin:0 50%;max-width:91.3px;overflow-x:clip;">รายการบิลที่จ่ายชำระ &lt;F8&gt;</span>
<span class="t" style="top:150px;font-size:7.5px;font-weight:normal;left:195.0px;transform:scaleX(0.890);transform-origin:0 50%;max-width:112.3px;overflow-x:clip;">รายละเอียดเช็คเพิ่มเติม &lt;Ctrl+F8&gt;</span>
<span class="t" style="top:150px;font-size:7.5px;font-weight:normal;left:306.7px;transform:scaleX(0.871);transform-origin:0 50%;max-width:86.3px;overflow-x:clip;">รายการภาษีซื้อ &lt;Ctrl+F7&gt;</span>
<span class="t" style="top:150px;font-size:7.5px;font-weight:normal;left:391.5px;transform:scaleX(0.875);transform-origin:0 50%;max-width:119.5px;overflow-x:clip;">รายการภาษีหัก ณ ที่จ่าย &lt;Ctrl+F10&gt;</span>
<span class="t" style="top:167px;font-size:8.1px;left:110.4px;transform:scaleX(0.986);transform-origin:0 50%;max-width:45.1px;overflow-x:clip;">ใบรับสินค้า#</span>
<span class="t" style="top:167px;font-size:8.1px;left:190.5px;transform:scaleX(1.005);transform-origin:0 50%;max-width:17.0px;overflow-x:clip;">วันที่</span>
<span class="t" style="top:167px;font-size:8.1px;left:233.8px;transform:scaleX(1.004);transform-origin:0 50%;max-width:47.8px;overflow-x:clip;">ใบรับวางบิล#</span>
<span class="t" style="top:167px;font-size:8.1px;left:299.0px;transform:scaleX(0.967);transform-origin:0 50%;max-width:30.3px;overflow-x:clip;">เลขที่บิล</span>
<span class="t" style="top:167px;font-size:8.1px;right:293.3px;transform:scaleX(0.945);transform-origin:100% 50%;max-width:38.8px;overflow-x:clip;">จำนวนเงิน</span>
<span class="t" style="top:167px;font-size:8.1px;right:234.5px;transform:scaleX(1.020);transform-origin:100% 50%;max-width:39.7px;overflow-x:clip;">ยอดคงค้าง</span>
<span class="t" style="top:167px;font-size:8.1px;right:164.2px;transform:scaleX(1.042);transform-origin:100% 50%;max-width:30.5px;overflow-x:clip;">ยอดจ่าย</span>
<span class="t" style="top:182px;font-size:8.1px;left:109.5px;transform:scaleX(1.028);transform-origin:0 50%;max-width:44.8px;overflow-x:clip;">RR0000080</span>
<span class="t" style="top:182px;font-size:8.1px;left:190.4px;transform:scaleX(1.088);transform-origin:0 50%;max-width:36.7px;overflow-x:clip;">20<span style="margin:0 0.9px">/</span>01<span style="margin:0 0.9px">/</span>54</span>
<span class="t" style="top:182px;font-size:11.5px;left:233.4px;max-width:8.3px;overflow-x:clip;">~</span>
<span class="t" style="top:182px;font-size:8.1px;right:293.3px;transform:scaleX(1.047);transform-origin:100% 50%;max-width:37.6px;overflow-x:clip;">53,500.00</span>
<span class="t" style="top:182px;font-size:8.1px;right:233.7px;transform:scaleX(1.052);transform-origin:100% 50%;max-width:37.6px;overflow-x:clip;">53,500.00</span>
<span class="t" style="top:182px;font-size:8.1px;right:163.7px;transform:scaleX(1.044);transform-origin:100% 50%;max-width:37.6px;overflow-x:clip;">53,500.00</span>
<span class="t" style="top:249px;font-size:8.1px;left:101.3px;transform:scaleX(1.034);transform-origin:0 50%;max-width:86.0px;overflow-x:clip;">VAT(กรณีจ่ายค่าบริการ)</span>
<span class="t" style="top:247px;font-size:8.1px;right:437.8px;transform:scaleX(1.053);transform-origin:100% 50%;max-width:17.4px;overflow-x:clip;">0.00</span>
<span class="t" style="top:249px;font-size:8.1px;right:231.2px;transform:scaleX(0.989);transform-origin:100% 50%;max-width:89.3px;overflow-x:clip;">ยอดชำระตามใบรับสินค้า</span>
<span class="t" style="top:247px;font-size:8.1px;right:163.0px;transform:scaleX(1.055);transform-origin:100% 50%;max-width:37.6px;overflow-x:clip;">53,500.00</span>
<span class="t" style="top:263px;font-size:8.1px;right:502.4px;transform:scaleX(0.977);transform-origin:100% 50%;max-width:30.3px;overflow-x:clip;">เลขที่บิล</span>
<span class="t" style="top:263px;font-size:8.1px;left:279.7px;transform:scaleX(0.943);transform-origin:0 50%;max-width:18.7px;overflow-x:clip;">ลวท.</span>
<span class="t" style="top:262px;font-size:8.1px;font-weight:normal;left:306.4px;white-space:pre;word-spacing:1.6px;max-width:13.8px;overflow-x:clip;">/  /</span>
<span class="t" style="top:282px;font-size:8.1px;right:525.0px;transform:scaleX(1.026);transform-origin:100% 50%;max-width:43.3px;overflow-x:clip;">ดอกเบี้ยจ่าย</span>
<span class="t" style="top:282px;font-size:8.1px;right:463.7px;transform:scaleX(0.966);transform-origin:100% 50%;max-width:24.1px;overflow-x:clip;">เงินสด</span>
<span class="t" style="top:282px;font-size:8.1px;left:237.0px;transform:scaleX(0.993);transform-origin:0 50%;max-width:83.6px;overflow-x:clip;">ชำระโดยอื่นๆ(ด้านล่าง)</span>
<span class="t" style="top:282px;font-size:8.1px;right:307.3px;transform:scaleX(1.015);transform-origin:100% 50%;max-width:58.4px;overflow-x:clip;">ภาษีหัก ณ ที่จ่าย</span>
<span class="t" style="top:282px;font-size:8.1px;right:236.2px;transform:scaleX(0.980);transform-origin:100% 50%;max-width:58.8px;overflow-x:clip;">ส่วนลดเงินสดรับ</span>
<span class="t" style="top:282px;font-size:8.1px;right:163.0px;transform:scaleX(1.016);transform-origin:100% 50%;max-width:43.5px;overflow-x:clip;">ยอดจ่ายจริง</span>
<span class="t" style="top:294px;font-size:8.1px;right:526.1px;transform:scaleX(1.028);transform-origin:100% 50%;max-width:17.4px;overflow-x:clip;">0.00</span>
<span class="t" style="top:294px;font-size:8.1px;right:457.7px;transform:scaleX(1.047);transform-origin:100% 50%;max-width:17.4px;overflow-x:clip;">0.00</span>
<span class="t" style="top:294px;font-size:8.1px;right:382.7px;transform:scaleX(1.050);transform-origin:100% 50%;max-width:37.6px;overflow-x:clip;">53,500.00</span>
<span class="t" style="top:294px;font-size:8.1px;right:308.3px;transform:scaleX(1.059);transform-origin:100% 50%;max-width:17.4px;overflow-x:clip;">0.00</span>
<span class="t" style="top:294px;font-size:8.1px;right:163.7px;transform:scaleX(1.050);transform-origin:100% 50%;max-width:37.6px;overflow-x:clip;">53,500.00</span>
<span class="t" style="top:311px;font-size:8.1px;left:107.0px;transform:scaleX(1.009);transform-origin:0 50%;max-width:70.6px;overflow-x:clip;">ชำระโดยอื่นๆ &lt;F7&gt;</span>
<span class="t" style="top:311px;font-size:8.1px;left:198.0px;transform:scaleX(0.979);transform-origin:0 50%;max-width:25.9px;overflow-x:clip;">ลงวันที่</span>
<span class="t" style="top:311px;font-size:8.1px;left:177.0px;width:200px;text-align:center;transform:scaleX(0.955);transform-origin:50% 50%;">ธนาคาร</span>
<span class="t" style="top:311px;font-size:8.1px;right:301.6px;transform:scaleX(0.945);transform-origin:100% 50%;max-width:38.8px;overflow-x:clip;">จำนวนเงิน</span>
<span class="t" style="top:311px;font-size:8.1px;right:232.0px;transform:scaleX(0.997);transform-origin:100% 50%;max-width:43.7px;overflow-x:clip;">ยอดคงเหลือ</span>
<span class="t" style="top:311px;font-size:8.1px;right:164.0px;transform:scaleX(1.012);transform-origin:100% 50%;max-width:35.2px;overflow-x:clip;">ยอดชำระ</span>
<span class="t" style="top:327px;font-size:8.1px;left:106.0px;transform:scaleX(0.997);transform-origin:0 50%;max-width:40.3px;overflow-x:clip;">QP191819</span>
<span class="t" style="top:327px;font-size:8.1px;left:197.5px;transform:scaleX(1.068);transform-origin:0 50%;max-width:36.7px;overflow-x:clip;">04<span style="margin:0 0.9px">/</span>03<span style="margin:0 0.9px">/</span>54</span>
<span class="t" style="top:327px;font-size:8.1px;left:240.5px;transform:scaleX(0.917);transform-origin:0 50%;max-width:12.0px;overflow-x:clip;">C2</span>
<span class="t" style="top:327px;font-size:8.1px;left:262.0px;transform:scaleX(0.841);transform-origin:0 50%;max-width:18.2px;overflow-x:clip;">BBL</span>
<span class="t" style="top:327px;font-size:8.1px;right:301.3px;transform:scaleX(1.052);transform-origin:100% 50%;max-width:37.6px;overflow-x:clip;">53,500.00</span>
<span class="t" style="top:327px;font-size:8.1px;right:231.2px;transform:scaleX(1.085);transform-origin:100% 50%;max-width:17.4px;overflow-x:clip;">0.00</span>
<span class="t" style="top:327px;font-size:8.1px;right:161.2px;transform:scaleX(1.058);transform-origin:100% 50%;max-width:37.6px;overflow-x:clip;">53,500.00</span>
<span class="t" style="top:380px;font-size:10.3px;left:323.9px;transform:scaleX(0.951);transform-origin:0 50%;max-width:46.3px;overflow-x:clip;">express1</span>
<span class="t" style="top:399px;font-size:7.7px;font-weight:normal;left:292.2px;transform:scaleX(1.001);transform-origin:0 50%;max-width:108.8px;overflow-x:clip;">ที่เก็บข้อมูล = C:\ExpressI\TEST</span>
<span class="t" style="top:412px;font-size:7.7px;font-weight:normal;left:267.5px;transform:scaleX(1.010);transform-origin:0 50%;white-space:pre;max-width:82.3px;overflow-x:clip;">เวอร์ชั่น =  1.0 (Internal)</span>
<span class="t" style="top:412px;font-size:7.7px;font-weight:normal;left:361.3px;transform:scaleX(0.996);transform-origin:0 50%;max-width:65.1px;overflow-x:clip;">S/N T-10E-090019</span>
<span class="t" style="top:424px;font-size:7.7px;font-weight:normal;left:267.0px;transform:scaleX(1.010);transform-origin:0 50%;white-space:pre;max-width:81.1px;overflow-x:clip;">วันที่ทำการ  =  11/03/54</span>
<span class="t" style="top:424px;font-size:7.7px;font-weight:normal;left:359.6px;transform:scaleX(0.992);transform-origin:0 50%;white-space:pre;max-width:58.2px;overflow-x:clip;">รหัสผู้ใช้  =  BIT9</span>
<span class="t" style="top:488px;font-size:10px;font-weight:normal;color:#383838;left:2.6px;transform:scaleX(0.934);transform-origin:0 50%;max-width:131.6px;overflow-x:clip;">express1 (C:\ExpressI\TEST)</span>
<span class="t" style="top:488px;font-size:10px;font-weight:normal;color:#202020;left:449.5px;transform:scaleX(0.906);transform-origin:0 50%;max-width:68.0px;overflow-x:clip;">รหัสเมนู 'ก/ง24'</span>
<span class="t" style="top:488px;font-size:10px;font-weight:normal;color:#a8a8a8;left:591.0px;transform:scaleX(0.909);transform-origin:0 50%;max-width:22.2px;overflow-x:clip;">CAP</span>
<span class="t" style="top:488px;font-size:10px;font-weight:normal;color:#303030;left:614.0px;transform:scaleX(0.948);transform-origin:0 50%;max-width:18.3px;overflow-x:clip;">INS</span>
<span class="t" style="top:488px;font-size:10px;font-weight:normal;color:#303030;left:638.7px;transform:scaleX(0.891);transform-origin:0 50%;max-width:24.4px;overflow-x:clip;">NUM</span>
<span class="t" style="top:488px;font-size:10px;font-weight:normal;color:#a8a8a8;left:663.9px;transform:scaleX(0.941);transform-origin:0 50%;max-width:28.3px;overflow-x:clip;">SCRL</span>
<span class="t" style="top:504px;font-size:7.5px;left:13.9px;transform:scaleX(0.913);transform-origin:0 50%;max-width:18.7px;overflow-x:clip;">Start</span>
<span class="t" style="top:504px;font-size:7.5px;font-weight:normal;left:48.6px;transform:scaleX(0.860);transform-origin:0 50%;max-width:91.0px;overflow-x:clip;">บ้านสวนพอเพียง | หมู่บ้าน...</span>
<span class="t" style="top:504px;font-size:7.0px;font-weight:normal;left:147.0px;transform:scaleX(0.872);transform-origin:0 50%;max-width:87.6px;overflow-x:clip;">snmain - Serial No. - [Seri...</span>
<span class="t" style="top:504px;font-size:7.5px;left:244.5px;transform:scaleX(0.939);transform-origin:0 50%;max-width:84.7px;overflow-x:clip;">Express Accounting -...</span>
<span class="t" style="top:504px;font-size:7.5px;font-weight:normal;left:670.0px;transform:scaleX(0.904);transform-origin:0 50%;max-width:16.2px;overflow-x:clip;">9:20</span>
</div>
</body>
</html>
